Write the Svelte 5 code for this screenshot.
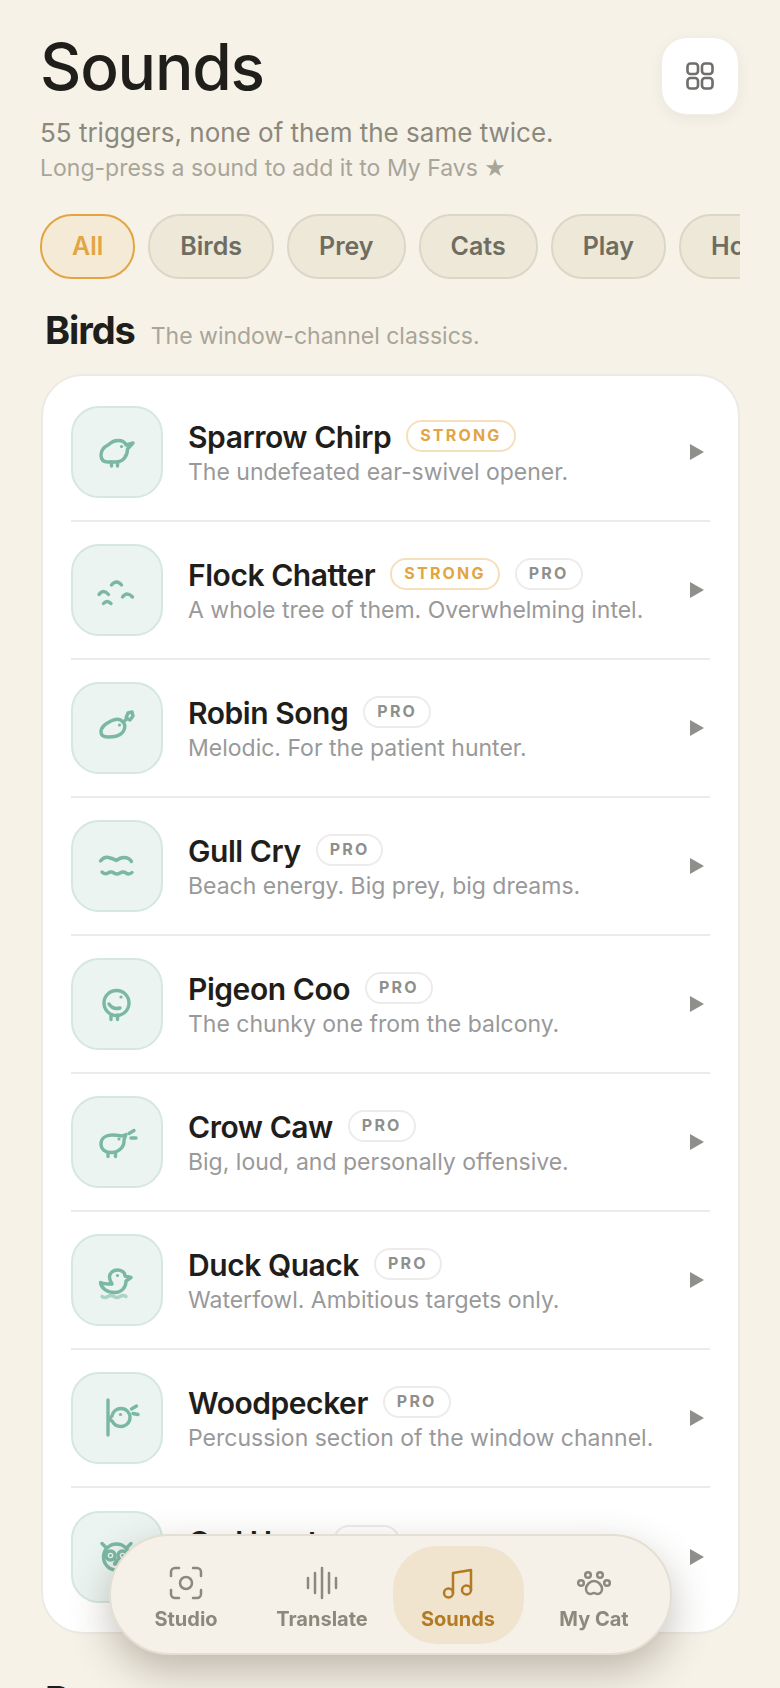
<script>
  const chips = ['All', 'Birds', 'Prey', 'Cats', 'Play', 'Home'];
  const rows = [
    { t: 'Sparrow Chirp', s: 'The undefeated ear-swivel opener.', strong: true, pro: false, i: 'sparrow' },
    { t: 'Flock Chatter', s: 'A whole tree of them. Overwhelming intel.', strong: true, pro: true, i: 'flock' },
    { t: 'Robin Song', s: 'Melodic. For the patient hunter.', pro: true, i: 'robin' },
    { t: 'Gull Cry', s: 'Beach energy. Big prey, big dreams.', pro: true, i: 'gull' },
    { t: 'Pigeon Coo', s: 'The chunky one from the balcony.', pro: true, i: 'pigeon' },
    { t: 'Crow Caw', s: 'Big, loud, and personally offensive.', pro: true, i: 'crow' },
    { t: 'Duck Quack', s: 'Waterfowl. Ambitious targets only.', pro: true, i: 'duck' },
    { t: 'Woodpecker', s: 'Percussion section of the window channel.', pro: true, i: 'wood' },
    { t: 'Owl Hoot', s: 'Night shift. Deeply unsettling.', pro: true, i: 'owl' }
  ];
  const nav = [
    { l: 'Studio', i: 'studio' },
    { l: 'Translate', i: 'translate' },
    { l: 'Sounds', i: 'sounds', on: true },
    { l: 'My Cat', i: 'cat' }
  ];
</script>

<div class="page">
  <header class="head">
    <div>
      <h1>Sounds</h1>
      <p class="lead">55 triggers, none of them the same twice.</p>
      <p class="hint">Long-press a sound to add it to My Favs <span class="star">★</span></p>
    </div>
    <button class="grid" aria-label="Layout">
      <svg viewBox="0 0 28 28" width="28" height="28" fill="none" stroke="currentColor" stroke-width="2.6">
        <rect x="1.5" y="1.5" width="10.5" height="10.5" rx="3" /><rect x="16" y="1.5" width="10.5" height="10.5" rx="3" />
        <rect x="1.5" y="16" width="10.5" height="10.5" rx="3" /><rect x="16" y="16" width="10.5" height="10.5" rx="3" />
      </svg>
    </button>
  </header>

  <div class="chips">
    {#each chips as c, n}
      <span class="chip" class:on={n === 0}>{c}</span>
    {/each}
  </div>

  <div class="sec"><h2>Birds</h2><span>The window-channel classics.</span></div>

  <div class="card">
    {#each rows as r}
      <div class="row">
        <div class="tile">
          <svg viewBox="0 0 48 48" width="48" height="48" fill="none" stroke="#7ab8a3" stroke-width="3.4" stroke-linecap="round" stroke-linejoin="round">
            {#if r.i === 'sparrow'}
              <path d="M15 17C18 15 19 12.5 25 12.5C29 12.5 32 14 33 17L40 15L34.5 21C34.5 28 30 34 23 34H15C10 34 8 31 8 27C8 22 11 19 15 17z" />
              <path d="M18.5 34v4M24.5 34v4" /><circle cx="28.5" cy="18.5" r="1.6" fill="#7ab8a3" stroke="none" />
            {:else if r.i === 'flock'}
              <path d="M18.5 19Q23.5 13 28.5 19M6 28.5Q10.5 22.5 15.5 28.5M29.5 31Q34 25 39.5 31M10.5 37.5Q14 33.5 18 37.5" />
            {:else if r.i === 'robin'}
              <path d="M8 28C8 22 14 19 18 17C22 15 27 14.5 30 18C33 21 32 26 29 29C26 32 20 33 15 33C10 33 8 31 8 28z" />
              <path d="M30 18L34 15M33 14L35 9L39 8L40 12L37 16Z" /><circle cx="26.5" cy="21" r="1.6" fill="#7ab8a3" stroke="none" />
            {:else if r.i === 'gull'}
              <path d="M7.5 19Q11 14.5 15.5 15.5Q20 16.5 23.5 18.5Q27 15.5 31 15.5Q36 15.5 38.5 19.5" />
              <path d="M9 30Q12 33 15 31Q18 29 21 31Q24 33 27 31Q30 29 33 31Q36 33 39 30.5" />
            {:else if r.i === 'pigeon'}
              <ellipse cx="23.5" cy="23" rx="12.5" ry="12.5" /><path d="M16 24Q20 30 27 28" />
              <path d="M18 35v4.5M24.5 35v4.5" /><circle cx="28" cy="17" r="1.6" fill="#7ab8a3" stroke="none" />
            {:else if r.i === 'crow'}
              <path d="M8 26C8 20 13 17 19 17C23 17 26 17.5 29 18L33 16.5L31 22C31.5 29 26 34 19.5 34.5C12 35 8 31 8 26z" />
              <path d="M15 34.5v4M22.5 34.5v4M36 15.5L41 12.5M38 20h5" /><circle cx="26" cy="21" r="1.6" fill="#7ab8a3" stroke="none" />
            {:else if r.i === 'duck'}
              <path d="M32 20C32 16 28 14 24.5 14C20 14 16.5 17 16.5 21C16.5 24 18 26 19 28C15 28 10 28 7.5 26.5C8 32 14 36.5 22 36.5C28 36.5 33 32 33 25L38 21.5L32 20z" />
              <path d="M9 40.5Q12 42.5 15 40.5Q18 38.5 21 40.5Q24 42.5 27 40.5Q30 38.5 33 40.5" opacity=".55" /><circle cx="24.5" cy="19.5" r="1.6" fill="#7ab8a3" stroke="none" />
            {:else if r.i === 'wood'}
              <path d="M15 6v35" />
              <path d="M19 22C20 17 24 14.5 28 14.5C33 14.5 37 18.5 37 23.5C37 28.5 33 32.5 28 32.5C24 32.5 21 30.5 19.5 27.5L16 25z" />
              <path d="M38.5 15L43.5 12M40 19.5l5 1" /><circle cx="27.5" cy="20.5" r="1.6" fill="#7ab8a3" stroke="none" />
            {:else}
              <path d="M9 10.5l4 4M38 10.5l-4 4" />
              <circle cx="23.5" cy="24" r="13" /><circle cx="17.5" cy="22.5" r="4.5" /><circle cx="29.5" cy="22.5" r="4.5" />
              <circle cx="17.5" cy="22.5" r="1.4" fill="#7ab8a3" stroke="none" /><circle cx="29.5" cy="22.5" r="1.4" fill="#7ab8a3" stroke="none" />
              <path d="M23.5 27l-2 4h4z" />
            {/if}
          </svg>
        </div>
        <div class="txt">
          <div class="title">
            <b>{r.t}</b>
            {#if r.strong}<span class="badge strong">STRONG</span>{/if}
            {#if r.pro}<span class="badge">PRO</span>{/if}
          </div>
          <div class="sub">{r.s}</div>
        </div>
        <svg class="play" viewBox="0 0 14 16" width="14" height="16"><path d="M0 0l14 8-14 8z" fill="#8f8f8c" /></svg>
      </div>
    {/each}
  </div>

  <div class="sec next"><h2>Prey</h2><span>Small, fast, and worth waiting for.</span></div>
</div>

<nav class="nav">
  {#each nav as n}
    <div class="item" class:on={n.on}>
      <svg viewBox="0 0 34 34" width="34" height="34" fill="none" stroke="currentColor" stroke-width="2.5" stroke-linecap="round" stroke-linejoin="round">
        {#if n.i === 'studio'}
          <path d="M2 10V6a4 4 0 0 1 4-4h4M24 2h4a4 4 0 0 1 4 4v4M32 24v4a4 4 0 0 1-4 4h-4M10 32H6a4 4 0 0 1-4-4v-4" /><circle cx="17" cy="17" r="6" />
        {:else if n.i === 'translate'}
          <path d="M3 12v10M10 7v20M17 2v30M24 7v20M31 12v10" />
        {:else if n.i === 'sounds'}
          <path d="M12 27V7l18-3v20" /><circle cx="7.5" cy="27" r="4.5" /><circle cx="25.5" cy="24" r="4.5" />
        {:else}
          <circle cx="11" cy="9" r="2.8" /><circle cx="23" cy="9" r="2.8" />
          <circle cx="4" cy="17" r="2.8" /><circle cx="30" cy="17" r="2.8" />
          <path d="M17 15c-4 0-8 4-8 8c0 3 2 5 4.5 5c1.5 0 2-1 3.5-1s2 1 3.5 1c2.5 0 4.5-2 4.5-5c0-4-4-8-8-8z" />
        {/if}
      </svg>
      <span>{n.l}</span>
    </div>
  {/each}
</nav>

<style>
  :global(body) { margin: 0; background: #f6f2e8; }
  :global(html) { overflow: hidden; }
  .page {
    width: 780px; height: 1688px; overflow: hidden; box-sizing: border-box;
    padding: 28px 40px 0; background: #f6f2e8;
    font-family: Inter, "Liberation Sans", sans-serif; color: #1f1e1a;
  }
  .head { display: flex; justify-content: space-between; align-items: flex-start; }
  h1 { margin: 0; font-size: 64px; line-height: 78px; font-weight: 500; letter-spacing: -1.2px; }
  .lead { margin: 10px 0 0; font-size: 26px; line-height: 34px; color: #8b887c; }
  .hint { margin: 3px 0 0; font-size: 23px; line-height: 30px; color: #a8a599; }
  .star { font-family: "DejaVu Sans", sans-serif; font-size: 24px; line-height: 24px; }
  .grid {
    width: 78px; height: 78px; margin: 9px 1px 0 0; padding: 0; border: 1px solid #f1eee6; border-radius: 26px;
    background: #fff; color: #6f6e6a; display: grid; place-items: center;
    box-shadow: 0 4px 14px rgba(60, 50, 30, .06);
  }
  .chips { display: flex; gap: 13px; margin-top: 31px; overflow: hidden; width: 700px; }
  .chip {
    flex: none; box-sizing: border-box; height: 65px; padding: 0 30px; border-radius: 32px;
    border: 2px solid #dbd7c6; background: #ede8d8; color: #6f6c60;
    font-size: 25px; font-weight: 600; line-height: 61px;
  }
  .chip.on { background: #f4ead6; border-color: #e3a542; color: #e3a542; }
  .sec { display: flex; align-items: baseline; gap: 16px; margin: 29px 0 0 5px; }
  h2 { margin: 0; font-size: 38px; line-height: 44px; font-weight: 700; letter-spacing: -1.1px; }
  .sec span { font-size: 23px; color: #a8a599; }
  .card {
    margin-top: 22px; box-sizing: border-box; width: 699px; margin-left: 1px; padding: 8px 28px 6px;
    background: #fff; border: 2px solid #eceae5; border-radius: 42px;
  }
  .row { display: flex; align-items: center; height: 138px; box-sizing: border-box; border-bottom: 2px solid #ecebe8; }
  .row:last-child { border-bottom: 0; }
  .tile {
    flex: none; width: 92px; height: 92px; box-sizing: border-box; border-radius: 28px;
    border: 2px solid #d5e7e0; background: #ebf4f1; display: grid; place-items: center;
  }
  .txt { flex: 1; margin-left: 25px; padding-top: 2px; }
  .title { display: flex; align-items: center; gap: 15px; height: 36px; }
  .title b { font-size: 30px; font-weight: 600; letter-spacing: -.45px; color: #1f1e1a; }
  .badge {
    box-sizing: border-box; height: 32px; padding: 0 12px; border-radius: 16px;
    border: 2px solid #eeecea; color: #8f8f8c; font-size: 16px; font-weight: 700;
    letter-spacing: 2.2px; line-height: 27px; margin-bottom: 2px;
  }
  .badge.strong { border-color: #f4e0bb; color: #e3a542; }
  .sub { font-size: 23px; line-height: 30px; color: #999; margin-top: 2px; }
  .play { flex: none; margin-right: 6px; }
  .next { margin-top: 44px; }
  .nav {
    position: fixed; left: 109px; top: 1534px; width: 563px; height: 121px; box-sizing: border-box;
    display: grid; grid-template-columns: repeat(4, 136px); justify-items: center; align-items: center; padding: 0 0 0 7px;
    background: #f5f1e9; border: 2px solid #e4dfd3; border-radius: 61px;
    box-shadow: 0 16px 40px rgba(60, 50, 30, .3);
    font-family: Inter, "Liberation Sans", sans-serif;
  }
  .item { box-sizing: border-box; width: 131px; height: 98px; padding-top: 8px; display: flex; flex-direction: column; align-items: center; justify-content: center; gap: 7px; color: #8b887c; border-radius: 44px; }
  .item span { font-size: 20px; font-weight: 700; line-height: 24px; }
  .item.on { background: #f0e4cf; color: #b27a22; }
</style>
